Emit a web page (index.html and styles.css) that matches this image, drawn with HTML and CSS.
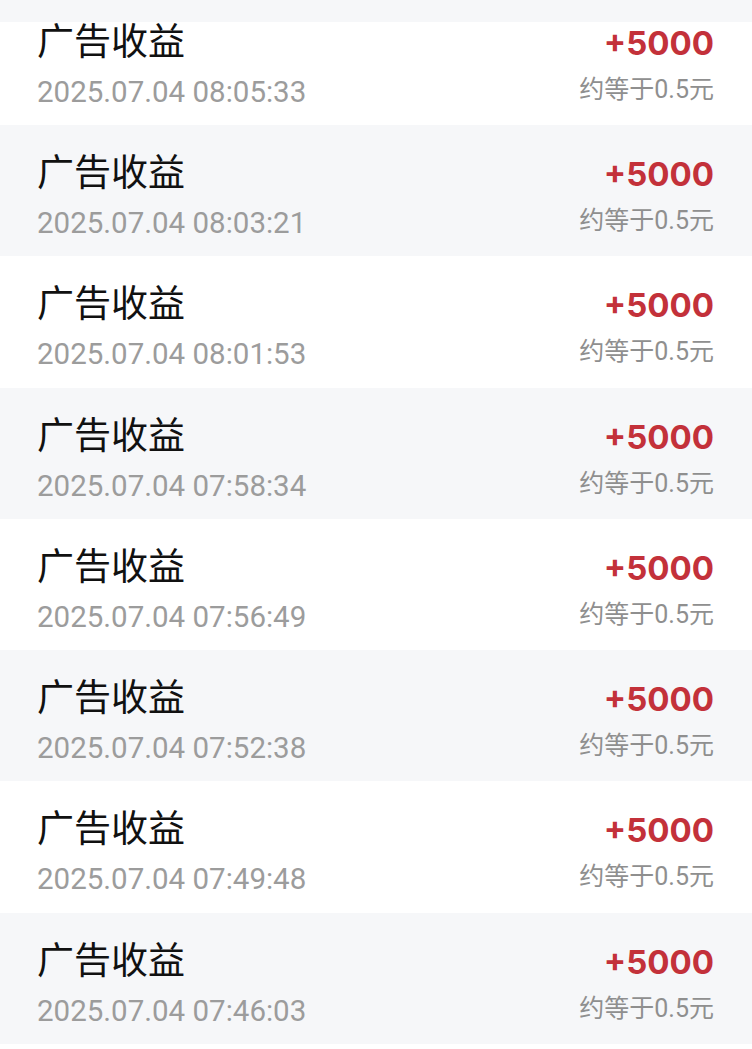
FILE: index.html
```html
<!DOCTYPE html>
<html lang="zh-CN">
<head>
  <meta charset="UTF-8">
  <meta name="viewport" content="width=device-width, initial-scale=1.0">
  <title>收益明细</title>
  <link rel="stylesheet" href="styles.css">
</head>
<body>
<div class="topbar"></div>
<ul class="records">
  <li class="record">
    <div class="info">
      <p class="title">广告收益</p>
      <p class="time">2025.07.04 08:05:33</p>
    </div>
    <div class="gain">
      <p class="amount">+5000</p>
      <p class="money">约等于0.5元</p>
    </div>
  </li>
  <li class="record">
    <div class="info">
      <p class="title">广告收益</p>
      <p class="time">2025.07.04 08:03:21</p>
    </div>
    <div class="gain">
      <p class="amount">+5000</p>
      <p class="money">约等于0.5元</p>
    </div>
  </li>
  <li class="record">
    <div class="info">
      <p class="title">广告收益</p>
      <p class="time">2025.07.04 08:01:53</p>
    </div>
    <div class="gain">
      <p class="amount">+5000</p>
      <p class="money">约等于0.5元</p>
    </div>
  </li>
  <li class="record">
    <div class="info">
      <p class="title">广告收益</p>
      <p class="time">2025.07.04 07:58:34</p>
    </div>
    <div class="gain">
      <p class="amount">+5000</p>
      <p class="money">约等于0.5元</p>
    </div>
  </li>
  <li class="record">
    <div class="info">
      <p class="title">广告收益</p>
      <p class="time">2025.07.04 07:56:49</p>
    </div>
    <div class="gain">
      <p class="amount">+5000</p>
      <p class="money">约等于0.5元</p>
    </div>
  </li>
  <li class="record">
    <div class="info">
      <p class="title">广告收益</p>
      <p class="time">2025.07.04 07:52:38</p>
    </div>
    <div class="gain">
      <p class="amount">+5000</p>
      <p class="money">约等于0.5元</p>
    </div>
  </li>
  <li class="record">
    <div class="info">
      <p class="title">广告收益</p>
      <p class="time">2025.07.04 07:49:48</p>
    </div>
    <div class="gain">
      <p class="amount">+5000</p>
      <p class="money">约等于0.5元</p>
    </div>
  </li>
  <li class="record">
    <div class="info">
      <p class="title">广告收益</p>
      <p class="time">2025.07.04 07:46:03</p>
    </div>
    <div class="gain">
      <p class="amount">+5000</p>
      <p class="money">约等于0.5元</p>
    </div>
  </li>
</ul>
</body>
</html>
```

FILE: styles.css
```css
body {
  margin: 0;
  background-color: #fff;
  font-family: Roboto, "Noto Sans CJK SC", sans-serif;
}
p {
  margin: 0;
}
.topbar {
  position: fixed;
  top: 0;
  left: 0;
  right: 0;
  height: 22px;
  background-color: #f6f7f9;
  z-index: 2;
}
.records {
  list-style: none;
  margin: -6.3px 0 0;
  padding: 0;
}
.record {
  display: flex;
  justify-content: space-between;
  height: 131.3px;
  box-sizing: border-box;
  padding: 27px 38px 0 37px;
}
.record:nth-child(even) {
  background-color: #f6f7f9;
}
.title {
  font-size: 37px;
  line-height: 44px;
  color: #111;
}
.time {
  margin-top: 8px;
  font-size: 29.5px;
  line-height: 38px;
  color: #9c9c9c;
}
.gain {
  text-align: right;
}
.amount {
  font-family: Inter, Roboto, sans-serif;
  font-size: 33px;
  line-height: 44px;
  font-weight: bold;
  color: #c3313a;
}
.money {
  margin-top: 7px;
  font-size: 25px;
  line-height: 36px;
  color: #8f8f8f;
}
```
